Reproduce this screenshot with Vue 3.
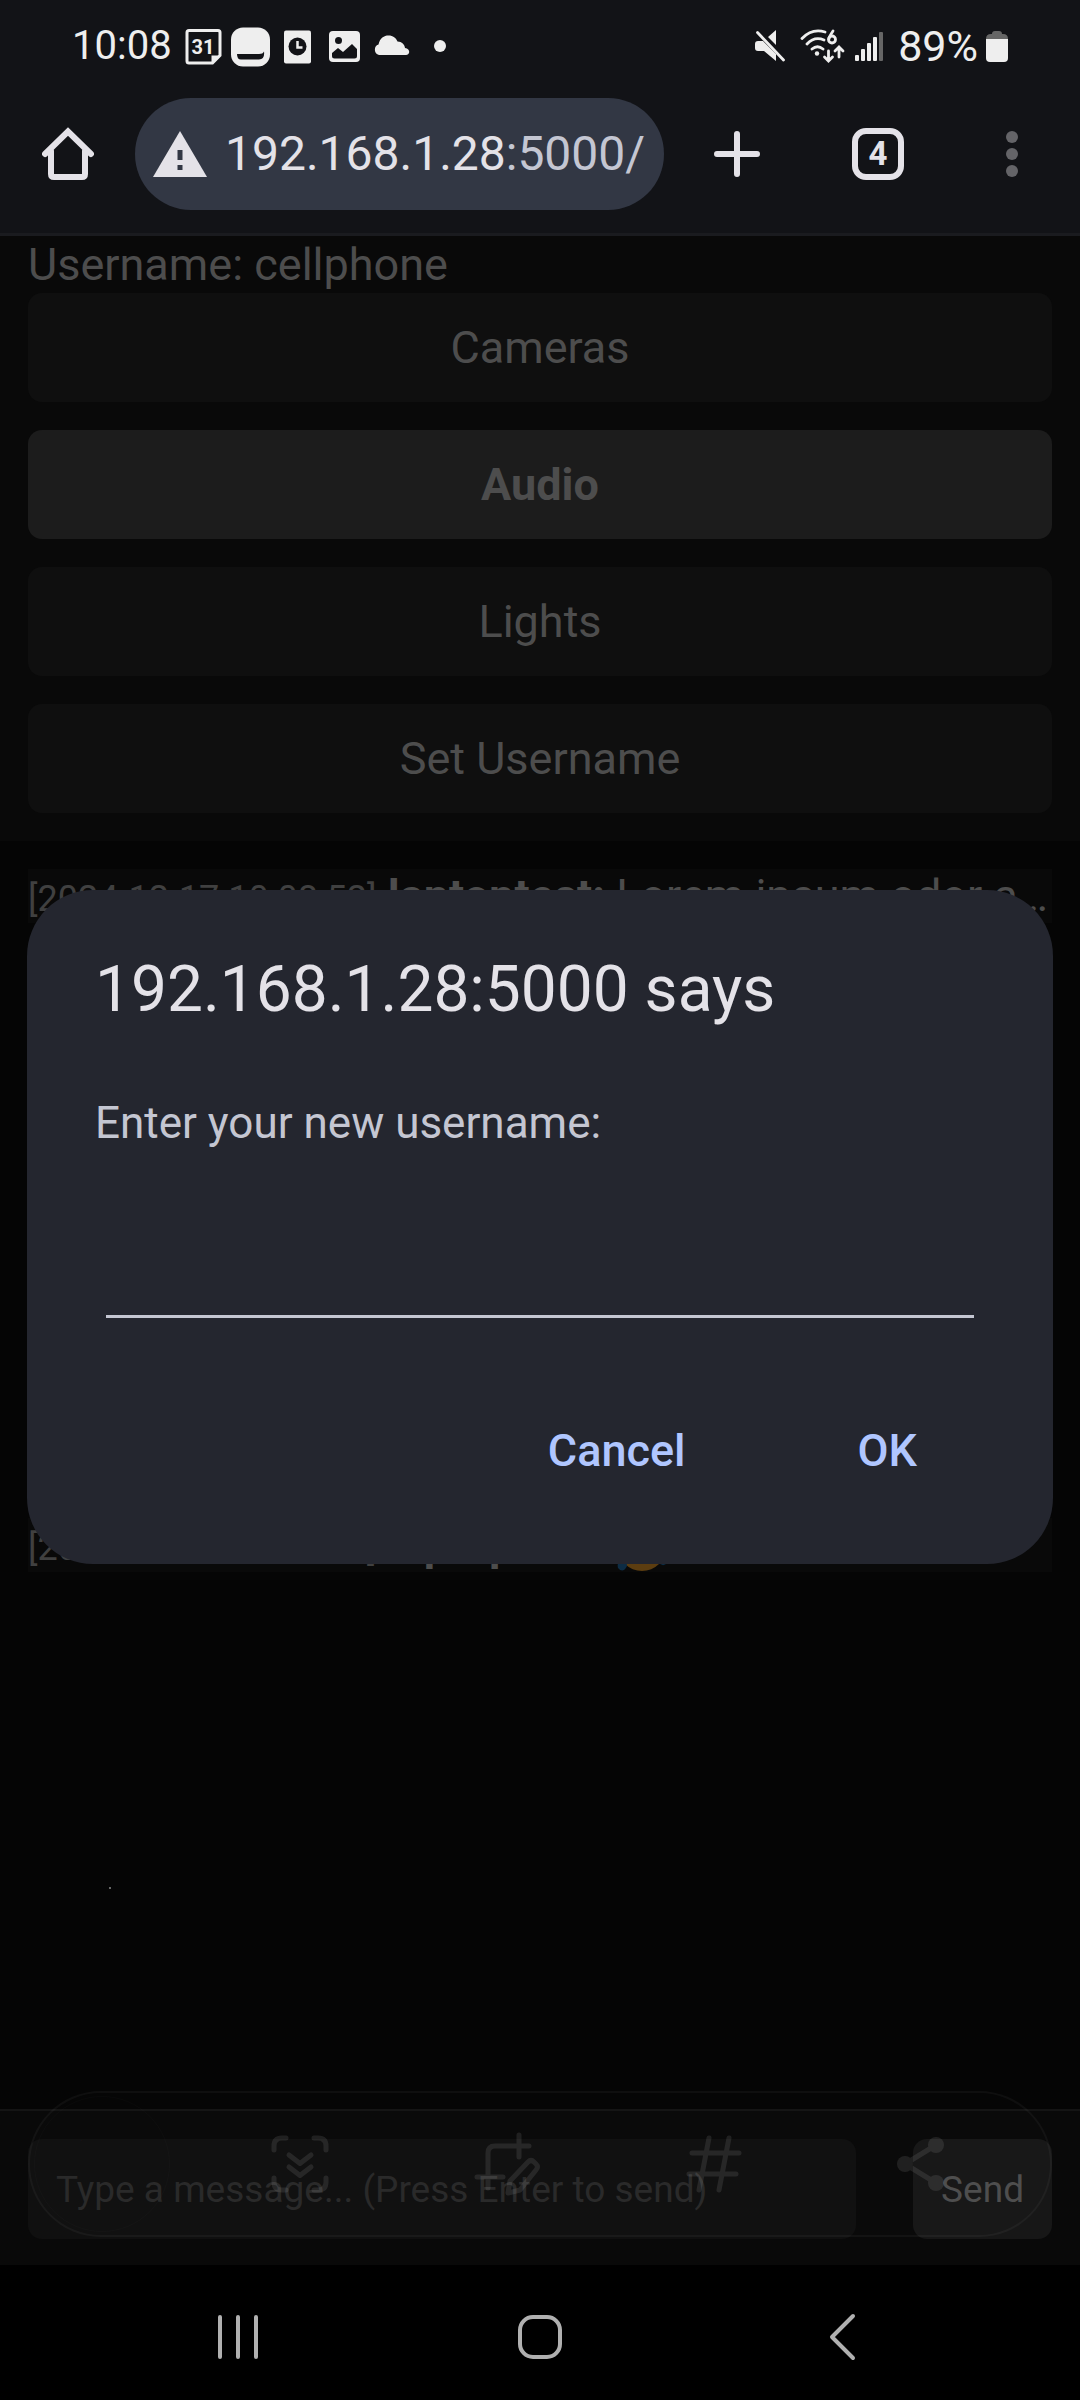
<script setup>
import { ref } from 'vue'

const navItems = ['Cameras', 'Audio', 'Lights', 'Set Username']
const activeItem = ref('Audio')
const username = ref('cellphone')
const newUsername = ref('')
const message = ref('')
</script>

<template>
  <div class="screen">
    <header class="browser">
      <div class="status">
        <span class="clock">10:08</span>
        <div class="notifications">
          <svg viewBox="0 0 47 47" aria-hidden="true">
            <path d="M8 7.500h29q2 0 2 2v23L31.500 40H8q-2 0-2-2V9.500q0-2 2-2z" transform="translate(1 0)" fill="none" stroke="#eee" stroke-width="3" />
            <path d="M31.500 41v-8.500H40z" fill="#eee" />
            <text x="23" y="31" text-anchor="middle" font-size="20" font-weight="700" fill="#eee">31</text>
          </svg>
          <svg viewBox="0 0 47 47" aria-hidden="true">
            <rect x="4" y="4.500" width="39" height="39" rx="12" fill="#eee" />
            <path d="M10 31h22q4 0 5-2.500 1 8-5 8H14q-4 0-4-5.500z" fill="#121317" />
          </svg>
          <svg viewBox="0 0 47 47" aria-hidden="true">
            <rect x="10" y="7.500" width="27" height="33" rx="2" fill="#eee" />
            <circle cx="23.500" cy="23.500" r="9" fill="#121317" />
            <path d="M23.500 18v6.500h5" fill="none" stroke="#eee" stroke-width="2.500" />
          </svg>
          <svg viewBox="0 0 47 47" aria-hidden="true">
            <rect x="8" y="8" width="31" height="31" rx="4" fill="#eee" />
            <circle cx="17.500" cy="17.500" r="3.500" fill="#121317" />
            <path d="M11 30l6-5 5 4 9-8 5 5v7q0 2.500-2.500 2.500h-20Q11 35.500 11 33z" fill="#121317" />
          </svg>
          <svg viewBox="0 0 47 47" aria-hidden="true">
            <path d="M11 32a5.500 5.500 0 0 1-.5-10.500C12 15 16 12.500 20.500 12.500c4.500 0 7.500 2.500 9 6 4.500 0 7 3 7.500 6.500 6 1 5 7 1 7z" fill="#eee" />
          </svg>
          <svg viewBox="0 0 47 47" aria-hidden="true">
            <circle cx="25" cy="23" r="6" fill="#eee" />
          </svg>
        </div>
        <div class="indicators">
          <svg width="30" height="32" viewBox="0 0 30 32" aria-hidden="true">
            <path d="M0 14q0-3 3-3h5l13 13v7L9 21H3q-3 0-3-3zM13 7l8-7v15z" fill="#eee" />
            <path d="M2.500 2.500l26 27.500" stroke="#eee" stroke-width="2.800" stroke-linecap="round" />
          </svg>
          <svg class="wifi" width="46" height="34" viewBox="0 0 46 34" fill="none" stroke="#eee" stroke-width="2.800" stroke-linecap="round" aria-hidden="true">
            <path d="M2 9.500Q12-1 25 3M7 15Q14.500 7 24 11M12 20q5.500-4.500 11 0" />
            <circle cx="17" cy="24.500" r="2.200" fill="#eee" stroke="none" />
            <path d="M28.500 22v9M24.500 28l4 4 4-4M39 28v-9M35 22l4-4 4 4" />
            <path d="M33 2q-4 6-4 8" />
            <circle cx="32" cy="10.500" r="3.500" />
          </svg>
          <svg class="signal" width="28" height="32" viewBox="0 0 28 32" fill="#eee" aria-hidden="true">
            <rect x="0" y="25" width="4" height="6" rx="1" />
            <rect x="6" y="19" width="4" height="12" rx="1" />
            <rect x="12" y="13" width="4" height="18" rx="1" />
            <rect x="18" y="7" width="4" height="24" rx="1" />
            <rect x="24" y="2" width="4" height="29" rx="1" fill="#666" />
          </svg>
          <span class="charge">89%</span>
          <svg class="battery" width="22" height="32" viewBox="0 0 22 32" aria-hidden="true">
            <path d="M6 4q0-3 3-3h4q3 0 3 3h1q5 0 5 5v3H0V9q0-5 5-5z" fill="#666" />
            <path d="M0 9h22v19q0 4-4 4H4q-4 0-4-4z" fill="#eee" />
          </svg>
        </div>
      </div>

      <div class="toolbar">
        <button class="icon-btn" type="button" aria-label="Home">
          <svg width="52" height="54" viewBox="0 0 52 54" fill="none" stroke="#e4e2e8" stroke-width="6" stroke-linecap="round" aria-hidden="true">
            <path d="M3 27L26 4.500 49 27M9 24v23q0 3 3 3h28q3 0 3-3V24" />
          </svg>
        </button>
        <div class="omnibox">
          <svg width="54" height="46" viewBox="0 0 54 46" role="img" aria-label="Not secure">
            <path d="M27 0L54 46H0z" fill="#e4e2e8" />
            <path d="M24.500 19h5v10h-5zM24.500 34h5v5h-5z" fill="#323744" />
          </svg>
          <span class="url">192.168.1.28<span class="port">:5000/</span></span>
        </div>
        <div class="actions">
          <button class="icon-btn" type="button" aria-label="New tab">
            <svg width="46" height="46" viewBox="0 0 46 46" aria-hidden="true">
              <path d="M23 3v40M3 23h40" stroke="#e4e2e8" stroke-width="6" stroke-linecap="round" />
            </svg>
          </button>
          <button class="icon-btn tabs" type="button" aria-label="4 open tabs">4</button>
          <button class="icon-btn" type="button" aria-label="Menu">
            <svg width="32" height="48" viewBox="0 0 32 48" fill="#646468" aria-hidden="true">
              <circle cx="16" cy="7" r="6" /><circle cx="16" cy="24" r="6" /><circle cx="16" cy="41" r="6" />
            </svg>
          </button>
        </div>
      </div>
    </header>

    <main class="page">
      <section class="site-head">
        <div class="username">Username: {{ username }}</div>
        <nav class="site-nav">
          <button
            v-for="item in navItems"
            :key="item"
            type="button"
            :class="{ active: item === activeItem }"
            @click="activeItem = item"
          >{{ item }}</button>
        </nav>
      </section>

      <section class="chat">
        <p class="row"><time>[2024-12-17 10:08:52]</time> <b>laptoptest:</b> Lorem ipsum odor amet</p>
        <p class="row">
          <time>[2024-12-17 10:08:53]</time> <b>laptoptest:</b>&nbsp;<svg class="emoji" viewBox="0 0 53 53" role="img" aria-label="Face with tears of joy">
            <circle cx="26" cy="25" r="24" fill="#5c3d10" />
            <path d="M12 28h28q-2 14-14 14T12 28z" fill="#2a1a08" />
            <path d="M10 34q-10 4-8 12 5 6 9-2zM42 34q10 4 8 8-4 3-8-2z" fill="#0d2c44" />
          </svg>
        </p>
        <span class="speck"></span>
      </section>

      <form class="composer" @submit.prevent>
        <input v-model="message" type="text" aria-label="Message" placeholder="Type a message... (Press Enter to send)" />
        <button type="submit">Send</button>

        <div class="capture-bar" aria-hidden="true">
          <div class="thumb">
            <span class="thumb-title">192.168.1.28:5000 says</span>
            <span class="thumb-text">Enter your new username:</span>
          </div>
          <div class="tool">
            <svg width="60" height="60" viewBox="0 0 60 60">
              <path d="M4 16v-4q0-8 8-8h4M44 4h4q8 0 8 8v4M56 44v4q0 8-8 8h-4M16 56h-4q-8 0-8-8v-4M19 21l11 8.500L41 21M19 33l11 8.500L41 33" />
            </svg>
          </div>
          <div class="tool">
            <svg width="66" height="66" viewBox="0 0 66 66">
              <path d="M3 46h26M14 57V22q0-7 7-7h34M45 4v22" />
              <path d="M34 62l2-12 18-19q3-3 6 0l2 2q3 3 0 6L46 59z" />
            </svg>
          </div>
          <div class="tool">
            <svg width="60" height="60" viewBox="0 0 60 60">
              <path d="M25 4l-10 52M45 4l-10 52M8 19h47M5 40h47" />
            </svg>
          </div>
          <div class="tool">
            <svg width="48" height="54" viewBox="0 0 48 54">
              <path d="M39 8L8 27l31 19" />
              <g fill="#fff" stroke="none"><circle cx="39" cy="8" r="8" /><circle cx="8" cy="27" r="8" /><circle cx="39" cy="46" r="8" /></g>
            </svg>
          </div>
        </div>
      </form>

      <div class="overlay">
        <form class="dialog" role="dialog" aria-labelledby="dialog-title" @submit.prevent>
          <h1 id="dialog-title">192.168.1.28:5000 says</h1>
          <label for="new-name">Enter your new username:</label>
          <input id="new-name" v-model="newUsername" type="text" />
          <div class="dialog-actions">
            <button type="button">Cancel</button>
            <button type="submit">OK</button>
          </div>
        </form>
      </div>
    </main>

    <footer class="system-nav">
      <button type="button" aria-label="Recent apps">
        <svg width="42" height="46" viewBox="0 0 42 46"><path d="M3 3v40M21 3v40M39 3v40" /></svg>
      </button>
      <button type="button" aria-label="Home screen">
        <svg width="46" height="46" viewBox="0 0 46 46"><rect x="3" y="3" width="40" height="40" rx="13" /></svg>
      </button>
      <button type="button" aria-label="Back">
        <svg width="28" height="48" viewBox="0 0 28 48"><path d="M25 3L4 24l21 21" /></svg>
      </button>
    </footer>
  </div>
</template>

<style>
body {
  margin: 0;
  background: #000;
}
</style>

<style scoped>
.screen {
  display: flex;
  flex-direction: column;
  min-height: 100vh;
  background: #000;
  font-family: Roboto, "Liberation Sans", sans-serif;
}

button,
input {
  box-sizing: border-box;
  margin: 0;
  padding: 0;
  border: 0;
  outline: 0;
  background: none;
  color: inherit;
  font-family: inherit;
}

svg {
  display: block;
  flex-shrink: 0;
}

.browser {
  background: #121317;
  border-bottom: 3px solid #1a1b1f;
}

.status {
  display: flex;
  align-items: center;
  height: 92px;
  padding: 0 72px;
  color: #eee;
}

.clock {
  font-size: 40px;
  line-height: 48px;
}

.charge {
  font-size: 43px;
  line-height: 48px;
}

.notifications {
  display: flex;
  margin-left: 8px;
}

.notifications svg {
  width: 47px;
  height: 47px;
}

.indicators {
  display: flex;
  align-items: center;
  margin-left: auto;
}

.wifi {
  margin-left: 15px;
}

.signal {
  margin: 0 15px 0 9px;
}

.battery {
  margin-left: 8px;
}

.toolbar {
  display: flex;
  align-items: center;
  padding: 6px 52px 23px 42px;
}

.icon-btn {
  display: flex;
  align-items: center;
  justify-content: center;
}

.omnibox {
  display: flex;
  flex: 1;
  align-items: center;
  gap: 18px;
  min-width: 0;
  height: 112px;
  margin: 0 50px 0 41px;
  padding: 0 18px;
  box-sizing: border-box;
  border-radius: 56px;
  background: #323744;
}

.url {
  color: #e4e2e8;
  font-size: 48px;
  line-height: 60px;
  white-space: nowrap;
}

.port {
  color: #c4c6d2;
}

.actions {
  display: flex;
  align-items: center;
  gap: 92px;
}

.tabs {
  width: 52px;
  height: 52px;
  border: 6px solid #e4e2e8;
  border-radius: 14px;
  color: #e4e2e8;
  font-size: 33px;
  font-weight: 700;
  line-height: 40px;
}

.page {
  position: relative;
  display: flex;
  flex: 1;
  flex-direction: column;
  background: #050505;
  color: #4d4d4d;
  font-size: 45px;
}

.site-head {
  padding: 0 28px 28px;
  background: #090909;
}

.username {
  line-height: 57px;
}

.site-nav {
  display: flex;
  flex-direction: column;
  gap: 28px;
}

.site-nav button {
  height: 109px;
  border-radius: 14px;
  background: #0f0f0f;
  font-size: 45px;
}

.site-nav .active {
  background: #1c1c1c;
  font-weight: 700;
}

.chat {
  position: relative;
  display: flex;
  flex: 1;
  flex-direction: column;
  gap: 595px;
  padding: 28px;
}

.row {
  height: 54px;
  margin: 0;
  overflow: hidden;
  background: #090909;
  line-height: 54px;
  text-overflow: ellipsis;
  white-space: nowrap;
}

.row time {
  color: #404040;
  font-size: 36px;
}

.emoji {
  display: inline-block;
  width: 53px;
  height: 53px;
  vertical-align: bottom;
}

.speck {
  position: absolute;
  bottom: 220px;
  left: 109px;
  width: 2px;
  height: 2px;
  background: #666;
}

.composer {
  position: relative;
  display: flex;
  gap: 57px;
  padding: 28px 28px 26px;
  border-top: 2px solid #141414;
  background: #090909;
}

.composer > input {
  flex: 1;
  min-width: 0;
  height: 100px;
  padding: 0 28px;
  border-radius: 14px;
  background: #101010;
  font-size: 37px;
}

.composer > input::placeholder {
  color: #292929;
  opacity: 1;
}

.composer > button {
  height: 100px;
  padding: 0 28px;
  border-radius: 14px;
  background: #171717;
  font-size: 37px;
}

.capture-bar {
  position: absolute;
  right: 28px;
  bottom: 28px;
  left: 28px;
  display: flex;
  align-items: center;
  height: 146px;
  padding: 0 26px 0 4px;
  box-sizing: border-box;
  border: 2px solid rgba(255, 255, 255, 0.04);
  border-radius: 73px;
  background: rgba(255, 255, 255, 0.006);
  pointer-events: none;
}

.thumb {
  display: flex;
  flex-direction: column;
  align-items: center;
  gap: 8px;
  width: 136px;
  height: 136px;
  margin-right: 27px;
  padding-top: 40px;
  box-sizing: border-box;
  border: 1px solid rgba(255, 255, 255, 0.015);
  border-radius: 50%;
  color: rgba(255, 255, 255, 0.03);
  white-space: nowrap;
}

.thumb-title {
  font-size: 8px;
  line-height: 10px;
}

.thumb-text {
  font-size: 6px;
  line-height: 8px;
}

.tool {
  display: flex;
  flex: 1;
  justify-content: center;
  opacity: 0.09;
}

.tool svg {
  fill: none;
  stroke: #fff;
  stroke-width: 5px;
  stroke-linecap: round;
  stroke-linejoin: round;
}

.overlay {
  position: absolute;
  inset: 0;
  display: flex;
  align-items: center;
  padding: 0 27px 48px;
}

.dialog {
  display: flex;
  flex: 1;
  flex-direction: column;
  padding: 60px 68px 65px;
  border-radius: 66px;
  background: #24262f;
}

.dialog h1 {
  margin: 0 0 65px;
  color: #e4e2e8;
  font-size: 64px;
  font-weight: 400;
  line-height: 80px;
}

.dialog label {
  color: #c4c6d2;
  font-size: 44px;
  line-height: 56px;
}

.dialog input {
  height: 96px;
  margin: 71px 11px 0;
  border-bottom: 3px solid #c4c6d2;
  color: #e4e2e8;
  font-size: 45px;
}

.dialog-actions {
  display: flex;
  justify-content: flex-end;
  gap: 92px;
  margin-top: 85px;
  padding-right: 28px;
}

.dialog-actions button {
  padding: 20px 40px;
  color: #b0c6ff;
  font-size: 45px;
  font-weight: 500;
  line-height: 56px;
}

.system-nav {
  display: flex;
  align-items: center;
  height: 135px;
  padding: 9px 87px 0;
  box-sizing: border-box;
  background: #000;
}

.system-nav button {
  display: flex;
  flex: 1;
  justify-content: center;
}

.system-nav svg {
  fill: none;
  stroke: #b0b0b0;
  stroke-width: 4px;
  stroke-linecap: round;
  stroke-linejoin: round;
}
</style>
